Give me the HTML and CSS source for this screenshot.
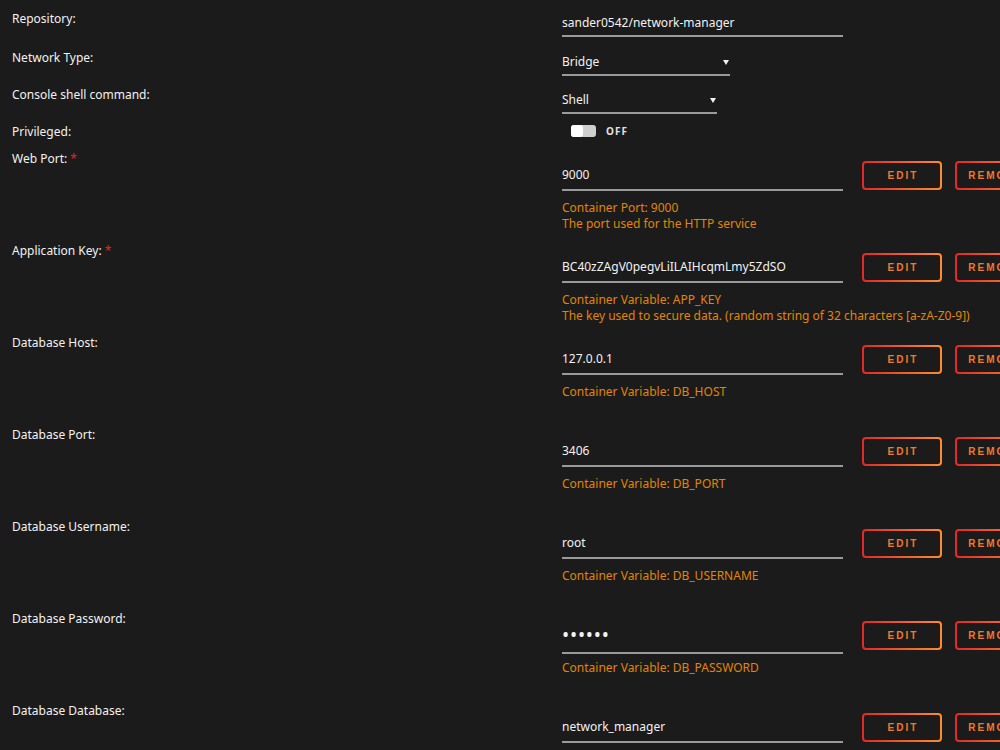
FILE: index.html
```html
<!DOCTYPE html>
<html>
<head>
<meta charset="utf-8">
<link rel="stylesheet" href="styles.css">
</head>
<body>
<div class="form">
  <div class="row r1">
    <div class="label">Repository:</div>
    <div class="value"><div class="field plain w-long">sander0542/network-manager</div></div>
  </div>
  <div class="row r2">
    <div class="label">Network Type:</div>
    <div class="value"><div class="field plain select w-net">Bridge<span class="caret"></span></div></div>
  </div>
  <div class="row r3">
    <div class="label">Console shell command:</div>
    <div class="value"><div class="field plain select w-shell">Shell<span class="caret"></span></div></div>
  </div>
  <div class="row r4">
    <div class="label">Privileged:</div>
    <div class="value toggle-wrap"><span class="toggle"><span class="knob"></span></span><span class="toggle-text">OFF</span></div>
  </div>

  <div class="row cfg">
    <div class="label">Web Port: <span class="req">*</span></div>
    <div class="value">
      <div class="line"><div class="field w-long">9000</div><button class="btn"><span>Edit</span></button><button class="btn"><span>Remove</span></button></div>
      <div class="desc">Container Port: 9000</div>
      <div class="desc">The port used for the HTTP service</div>
    </div>
  </div>
  <div class="row cfg">
    <div class="label">Application Key: <span class="req">*</span></div>
    <div class="value">
      <div class="line"><div class="field w-long">BC40zZAgV0pegvLiILAIHcqmLmy5ZdSO</div><button class="btn"><span>Edit</span></button><button class="btn"><span>Remove</span></button></div>
      <div class="desc">Container Variable: APP_KEY</div>
      <div class="desc">The key used to secure data. (random string of 32 characters [a-zA-Z0-9])</div>
    </div>
  </div>
  <div class="row cfg">
    <div class="label">Database Host:</div>
    <div class="value">
      <div class="line"><div class="field w-long">127.0.0.1</div><button class="btn"><span>Edit</span></button><button class="btn"><span>Remove</span></button></div>
      <div class="desc">Container Variable: DB_HOST</div>
    </div>
  </div>
  <div class="row cfg">
    <div class="label">Database Port:</div>
    <div class="value">
      <div class="line"><div class="field w-long">3406</div><button class="btn"><span>Edit</span></button><button class="btn"><span>Remove</span></button></div>
      <div class="desc">Container Variable: DB_PORT</div>
    </div>
  </div>
  <div class="row cfg">
    <div class="label">Database Username:</div>
    <div class="value">
      <div class="line"><div class="field w-long">root</div><button class="btn"><span>Edit</span></button><button class="btn"><span>Remove</span></button></div>
      <div class="desc">Container Variable: DB_USERNAME</div>
    </div>
  </div>
  <div class="row cfg">
    <div class="label">Database Password:</div>
    <div class="value">
      <div class="line"><div class="field w-long"><span class="dots">••••••</span></div><button class="btn"><span>Edit</span></button><button class="btn"><span>Remove</span></button></div>
      <div class="desc">Container Variable: DB_PASSWORD</div>
    </div>
  </div>
  <div class="row cfg last">
    <div class="label">Database Database:</div>
    <div class="value">
      <div class="line"><div class="field w-long">network_manager</div><button class="btn"><span>Edit</span></button><button class="btn"><span>Remove</span></button></div>
    </div>
  </div>
</div>
</body>
</html>
```

FILE: styles.css
```css
html, body {
  margin: 0;
  padding: 0;
  background: #1c1b1b;
  overflow: hidden;
}
body {
  font-family: "Noto Sans", "Liberation Sans", Arial, sans-serif;
  font-size: 12px;
  line-height: 16px;
  color: #f2f2f2;
  width: 1000px;
  height: 750px;
}
.form {
  padding-top: 11px;
}
.row {
  display: flex;
  align-items: flex-start;
}
.label {
  width: 550px;
  flex: none;
  padding-left: 12px;
  color: #f2f2f2;
}
.req {
  color: #e22828;
}
.value {
  flex: none;
  display: flex;
  flex-direction: column;
}
.r1 { height: 39px; }
.r2 { height: 37px; }
.r3 { height: 37px; }
.r4 { height: 26px; }
.r1 .field { margin-top: 4px; }
.r2 .field { margin-top: 4px; }
.r3 .field { margin-top: 5px; }

.field {
  box-sizing: border-box;
  color: #f2f2f2;
  padding: 6px 0;
  border-bottom: 2px solid #9a9a9a;
  white-space: nowrap;
  position: relative;
}
.field.plain {
  padding: 0 0 4px;
}
.w-long { width: 281px; }
.w-net { width: 168px; }
.w-shell { width: 155px; }
.caret {
  position: absolute;
  right: 1px;
  top: 6px;
  width: 0;
  height: 0;
  border-left: 3px solid transparent;
  border-right: 3px solid transparent;
  border-top: 5px solid #f2f2f2;
}

.toggle-wrap {
  flex-direction: row;
  align-items: center;
  padding-left: 9px;
  height: 14px;
}
.toggle {
  display: block;
  width: 25px;
  height: 12px;
  border-radius: 3px;
  background: #cfcfcf;
  position: relative;
}
.knob {
  position: absolute;
  left: 0;
  top: 0;
  width: 12px;
  height: 12px;
  border-radius: 3px;
  background: #ffffff;
}
.toggle-text {
  margin-left: 10px;
  font-size: 10px;
  font-weight: bold;
  letter-spacing: 1px;
  color: #e0e0e0;
}

.cfg { height: 92px; }
.cfg.last { height: auto; }
.cfg .label { padding-top: 1px; }
.line {
  display: flex;
  align-items: flex-start;
  margin-top: 11px;
  height: 30px;
}
.btn {
  flex: none;
  box-sizing: border-box;
  width: 80px;
  height: 29px;
  margin: 0 0 0 13px;
  padding: 0;
  border: 2px solid transparent;
  border-radius: 4px;
  background: linear-gradient(#1c1b1b, #1c1b1b) padding-box,
              linear-gradient(90deg, #e22828, #ff8c2f) border-box;
  font-family: "Liberation Sans", Arial, sans-serif;
  font-size: 10px;
  font-weight: bold;
  letter-spacing: 2px;
  text-transform: uppercase;
  color: #f07a2c;
  cursor: pointer;
}
.line .field + .btn {
  margin-left: 19px;
}
.btn span {
  padding-left: 2px;
}
.desc {
  color: #e08600;
  white-space: nowrap;
}
.line + .desc {
  margin-top: 9px;
}
.dots {
  font-size: 19px;
  letter-spacing: 0.8px;
  line-height: 16px;
}
```
